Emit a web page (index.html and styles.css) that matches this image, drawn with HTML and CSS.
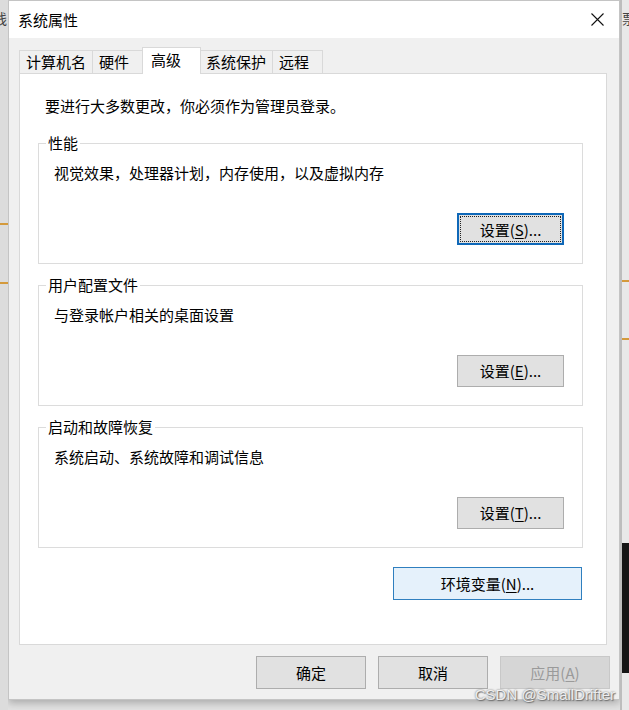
FILE: index.html
```html
<!DOCTYPE html>
<html lang="zh-CN">
<head>
  <meta charset="UTF-8" />
  <title>系统属性</title>
  <link rel="stylesheet" href="styles.css">
</head>
<body>
<div class="desk">
  <div class="side left">
    <span class="bgchar">线</span>
    <span class="oline l1"></span>
    <span class="oline l2"></span>
  </div>

  <div class="window">
    <div class="titlebar">
      <span class="title">系统属性</span>
      <svg class="close" width="13" height="13" viewBox="0 0 13 13"><path d="M0.5 0.5L12.5 12.5M12.5 0.5L0.5 12.5" stroke="#111" stroke-width="1.1" fill="none"/></svg>
    </div>

    <div class="content">
      <div class="tabs">
        <div class="tab">计算机名</div>
        <div class="tab">硬件</div>
        <div class="tab active">高级</div>
        <div class="tab">系统保护</div>
        <div class="tab">远程</div>
      </div>

      <div class="panel">
        <p class="note">要进行大多数更改，你必须作为管理员登录。</p>

        <fieldset class="group">
          <legend>性能</legend>
          <p>视觉效果，处理器计划，内存使用，以及虚拟内存</p>
          <div class="row"><button class="btn focused">设置(<u>S</u>)...</button></div>
        </fieldset>

        <fieldset class="group">
          <legend>用户配置文件</legend>
          <p>与登录帐户相关的桌面设置</p>
          <div class="row"><button class="btn">设置(<u>E</u>)...</button></div>
        </fieldset>

        <fieldset class="group">
          <legend>启动和故障恢复</legend>
          <p>系统启动、系统故障和调试信息</p>
          <div class="row"><button class="btn">设置(<u>T</u>)...</button></div>
        </fieldset>

        <div class="row env-row"><button class="btn env">环境变量(<u>N</u>)...</button></div>
      </div>

      <div class="footer">
        <button class="btn wide">确定</button>
        <button class="btn wide">取消</button>
        <button class="btn wide disabled">应用(<u>A</u>)</button>
      </div>
    </div>
  </div>

  <div class="side right">
    <span class="bgchar">票</span>
    <span class="oline r1"></span>
    <span class="oline r2"></span>
    <span class="dark"></span>
  </div>
</div>
<div class="watermark">CSDN @SmallDrifter</div>
</body>
</html>
```

FILE: styles.css
```css
* { box-sizing: border-box; }
body { margin: 0; background: #e2e2e2; font-family: "Noto Sans CJK SC", "Noto Sans", sans-serif; font-size: 15px; color: #000; width: 629px; height: 710px; overflow: hidden; position: relative; }
.desk { display: flex; height: 710px; }

.side { width: 8px; position: relative; background: #dcdcdc; overflow: hidden; }
.side.right { width: 9px; background: #e8e8e8; border-left: 2px solid #bdbdbd; }
.bgchar { position: absolute; top: 8px; left: -7px; font-size: 14px; color: #444; }
.side.right .bgchar { left: 0; }
.oline { position: absolute; left: 0; width: 9px; height: 2px; background: #d49a3c; }
.l1 { top: 223px; } .l2 { top: 282px; }
.r1 { top: 280px; } .r2 { top: 338px; }
.dark { position: absolute; left: 0; top: 543px; width: 9px; height: 130px; background: #151515; }

.window { width: 612px; height: 700px; background: #f0f0f0; border: 1px solid #c4c4c4; box-shadow: 0 3px 8px rgba(0,0,0,0.25); display: flex; flex-direction: column; }
.titlebar { height: 37px; background: #fff; display: flex; align-items: center; justify-content: space-between; padding: 0 15px 0 9px; }
.title { font-size: 15px; }
.close { display: block; }

.content { padding: 12px 12px 0 10px; }
.tabs { display: flex; align-items: flex-end; height: 23px; }
.tab { height: 23px; min-width: 51px; padding: 0 6px; line-height: 22px; background: #f0f0f0; border: 1px solid #d9d9d9; border-right: none; border-bottom: none; white-space: nowrap; }
.tab:nth-child(5) { border-right: 1px solid #d9d9d9; }
.tab.active { height: 27px; min-width: 59px; padding: 0 8px; margin: 0 -1px -1px -1px; line-height: 24px; background: #fff; border: 1px solid #d9d9d9; border-bottom: none; position: relative; z-index: 1; }
.tab.active + .tab { border-left: none; }

.panel { height: 572px; background: #fff; border: 1px solid #d9d9d9; padding: 22px 23px 0 18px; }
p { margin: 0; line-height: 20px; }
.note { margin-left: 7px; }

.group { border: 1px solid #dcdcdc; padding: 0; margin: 17px 0 0 0; min-width: 0; }
.group + .group { margin-top: 11px; }
.group legend { margin-left: 7px; padding: 0 2px; line-height: 20px; }
.group p { margin: 10px 0 0 15px; }
.row { display: flex; justify-content: flex-end; }
.group .row { margin: 30px 18px 18px 0; }

.btn { font-family: inherit; font-size: 15px; color: #000; height: 32px; width: 107px; background: #e1e1e1; border: 1px solid #adadad; padding: 0; line-height: 30px; }
.btn u { text-decoration: underline; text-underline-offset: 2px; }
.btn.focused { border: 2px solid #0f68b8; outline: 1px dotted #222; outline-offset: -4px; }
.env-row { margin: 19px 1px 0 0; }
.btn.env { width: 189px; height: 33px; background: #e5f1fb; border-color: #2f7fbf; }

.footer { display: flex; justify-content: flex-end; gap: 12px; margin-top: 11px; margin-right: -3px; }
.btn.wide { width: 110px; height: 33px; }
.btn.disabled { background: #d6d6d6; border-color: #c8c8c8; color: #9a9a9a; }

.watermark { position: absolute; right: 14px; bottom: 7px; font-family: "Liberation Sans", sans-serif; font-size: 15px; color: rgba(255,255,255,0.85); text-shadow: 0 0 2px #666, 1px 1px 1px #777; }
```
